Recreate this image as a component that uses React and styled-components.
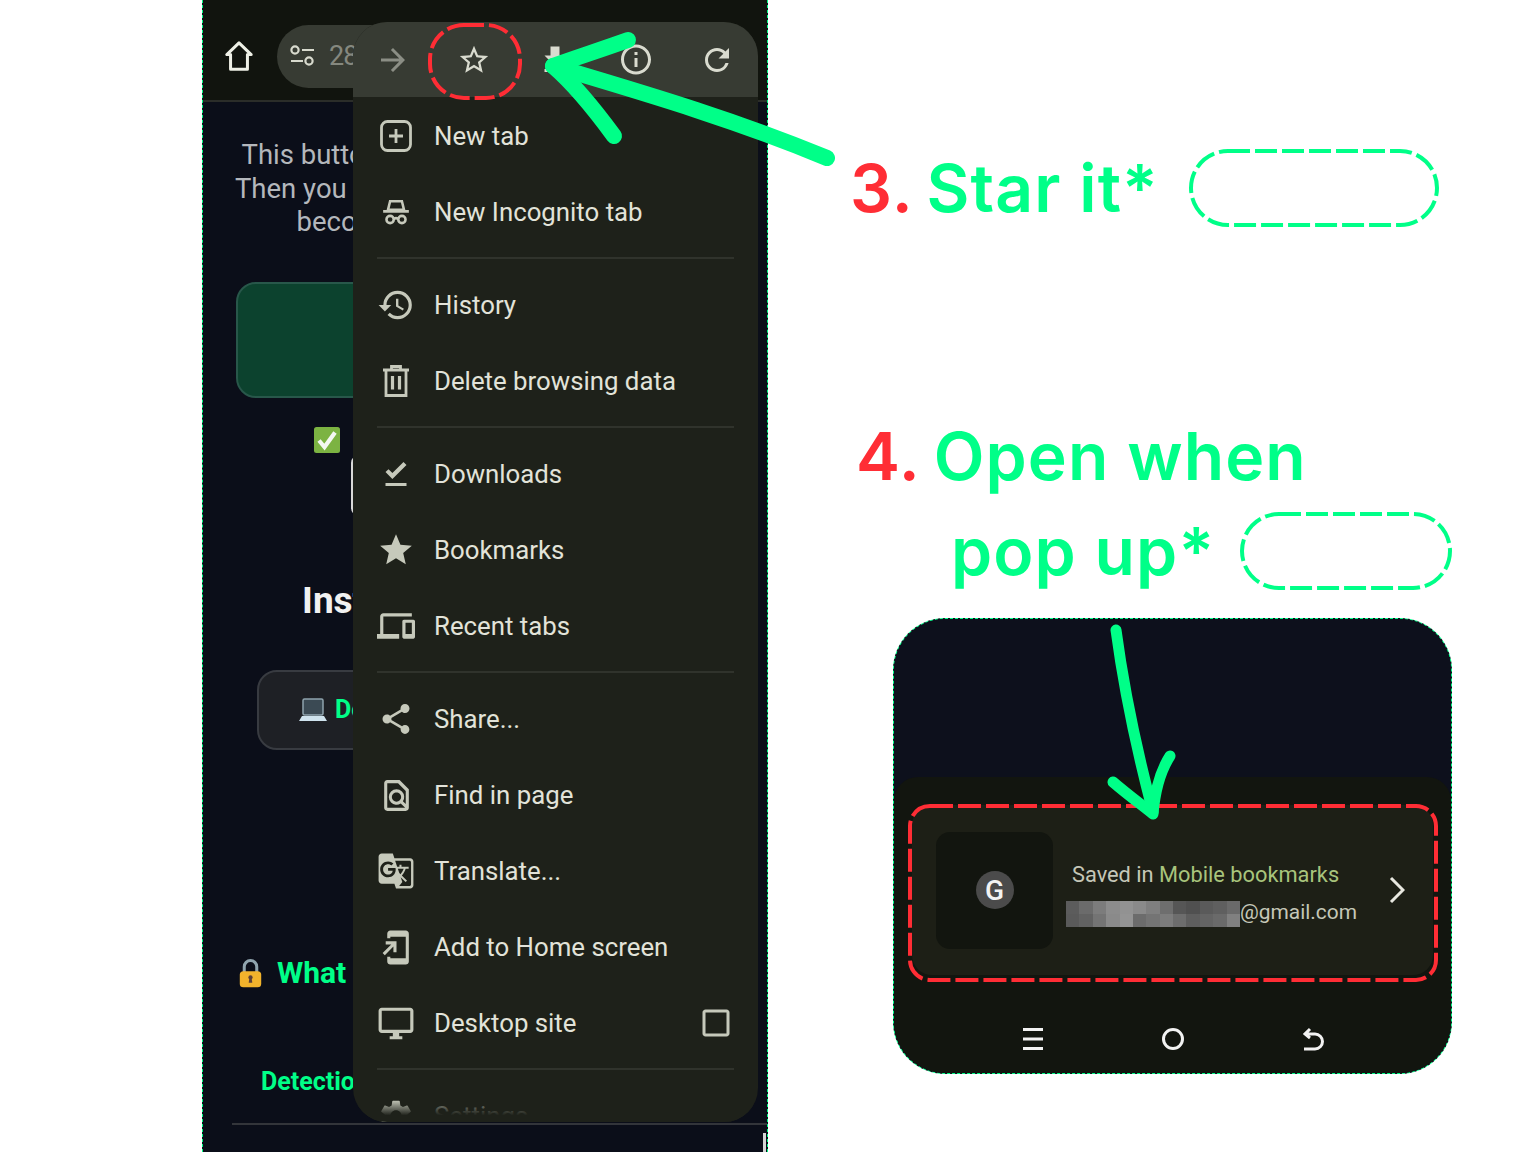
import React from "react";
import styled, { createGlobalStyle } from "styled-components";
import {
  MdArrowForward,
  MdStarBorder,
  MdFileDownload,
  MdInfoOutline,
  MdRefresh,
  MdHistory,
  MdFileDownloadDone,
  MdStar,
  MdOutlineDevices,
  MdShare,
  MdOutlineFindInPage,
  MdGTranslate,
  MdOutlineAddToHomeScreen,
  MdOutlineDesktopWindows,
  MdCheckBoxOutlineBlank,
  MdSettings,
} from "react-icons/md";

const GREEN = "#00ff88";
const RED = "#ff2d35";

const Global = createGlobalStyle`
  html, body { margin: 0; padding: 0; background: #fff; overflow: hidden; }
  * { box-sizing: border-box; }
  body { font-family: Roboto, "Liberation Sans", sans-serif; }
`;

const Page = styled.div`
  position: relative;
  width: 1536px;
  height: 1152px;
  display: flex;
  padding-left: 202px;
  overflow: hidden;
  background: #fff;
`;

/* left phone screenshot */
const Phone = styled.div`
  position: relative;
  width: 566px;
  height: 1152px;
  background: #0b0e19;
  border-left: 1px dashed ${GREEN};
  border-right: 1px dashed ${GREEN};
  overflow: hidden;
`;
const TopBar = styled.div`
  height: 102px;
  background: #11140e;
  border-bottom: 2px solid #2b2d29;
  display: flex;
  align-items: center;
  gap: 23px;
  padding: 12px 0 0 21px;
  color: #eef0e6;
`;
const Pill = styled.div`
  width: 200px;
  height: 63px;
  border-radius: 32px;
  background: #373b33;
  display: flex;
  align-items: center;
  gap: 12px;
  padding-left: 12px;
  color: #d8dace;
`;
const Faded = styled.span`
  font-size: 27px;
  color: #85887f;
  letter-spacing: -1px;
`;
const Body = styled.div`
  display: flex;
  flex-direction: column;
  align-items: center;
  padding: 36px 33px 0;
`;
const Intro = styled.p`
  margin: 0;
  text-align: center;
  font-size: 27.5px;
  line-height: 33.5px;
  color: #b4b7bc;
  white-space: nowrap;
`;
const GreenCard = styled.div`
  width: 100%;
  height: 116px;
  margin-top: 43px;
  background: #0c422e;
  border: 2px solid #28574a;
  border-radius: 20px;
`;
const CheckLine = styled.div`
  margin-top: 27px;
  height: 30px;
  display: flex;
  align-items: center;
  gap: 12px;
  color: ${GREEN};
  font-size: 24px;
  font-weight: 700;
  white-space: nowrap;
`;
const Outlined = styled.div`
  width: 268px;
  height: 61px;
  border: 2px solid #d8d8d8;
  border-radius: 8px;
`;
const SectionTitle = styled.h2`
  margin: 63px 0 0;
  font-size: 37px;
  line-height: 44px;
  font-weight: 700;
  color: #f1f1f1;
  white-space: nowrap;
`;
const DarkButton = styled.div`
  width: 456px;
  height: 80px;
  margin-top: 47px;
  background: #1e2025;
  border: 2px solid #383b41;
  border-radius: 20px;
  display: flex;
  align-items: center;
  padding-left: 39px;
  gap: 7px;
  color: ${GREEN};
  font-size: 25px;
  font-weight: 700;
`;
const WhatRow = styled.div`
  align-self: flex-start;
  margin: 205px 0 0 2px;
  display: flex;
  align-items: center;
  gap: 14px;
  color: ${GREEN};
  font-size: 30px;
  line-height: 36px;
  font-weight: 700;
  white-space: nowrap;
`;
const TableHead = styled.div`
  align-self: stretch;
  margin: 76px -33px 0 -4px;
  padding: 0 0 26px 29px;
  border-bottom: 2px solid #33353a;
  color: ${GREEN};
  font-size: 25px;
  line-height: 30px;
  font-weight: 700;
  white-space: nowrap;
`;
const EdgeSliver = styled.div`
  position: absolute;
  right: 1px;
  bottom: 0;
  width: 3px;
  height: 19px;
  background: #d6d6d6;
`;

/* chrome overflow menu */
const Menu = styled.div`
  position: absolute;
  left: 150px;
  top: 22px;
  width: 405px;
  height: 1100px;
  background: #1e211a;
  border-radius: 34px;
  overflow: hidden;
  &::after {
    content: "";
    position: absolute;
    left: 0;
    right: 0;
    bottom: 0;
    height: 22px;
    background: linear-gradient(to bottom, rgba(30, 33, 26, 0), #1e211a 70%);
  }
`;
const MenuBar = styled.div`
  height: 75px;
  background: #373b33;
  display: flex;
  align-items: center;
  gap: 45px;
  padding-left: 22px;
  color: #d9dbcf;
`;
const BarIcon = styled.span`
  display: flex;
  width: 36px;
  justify-content: center;
  color: ${(p) => p.$color || "#d9dbcf"};
`;
const Group = styled.div`
  padding: 0 0 8px;
  margin: 0 24px 7px;
  border-bottom: ${(p) => (p.$last ? "0" : "2px solid #30332c")};
`;
const Row = styled.div`
  height: 76px;
  padding-top: 2px;
  display: flex;
  align-items: center;
  color: ${(p) => (p.$dim ? "#8f9288" : "#e2e3d9")};
  font-size: 25.8px;
  white-space: nowrap;
`;
const RowIcon = styled.span`
  width: 38px;
  margin-right: 19px;
  display: flex;
  justify-content: center;
  color: #c6c9bb;
`;
const RowEnd = styled.span`
  margin-left: auto;
  display: flex;
  color: #c6c9bb;
`;

/* right instructions */
const Side = styled.div`
  flex: 1;
  display: flex;
  flex-direction: column;
`;
const Line = styled.div`
  display: flex;
  align-items: center;
  margin: ${(p) => p.$margin};
`;
const Heading = styled.div`
  color: ${GREEN};
  font-family: Inter, sans-serif;
  font-size: 66px;
  line-height: 76px;
  letter-spacing: 1.1px;
  font-weight: 600;
  white-space: nowrap;
`;
const Num = styled.span`
  color: ${RED};
  margin-right: -5px;
`;
const Popup = styled.div`
  width: 559px;
  height: 456px;
  margin: 28px 0 0 125px;
  background: #0d101c;
  border: 1px dashed ${GREEN};
  border-radius: 52px;
  overflow: hidden;
  display: flex;
  flex-direction: column;
  justify-content: flex-end;
`;
const Sheet = styled.div`
  height: 296px;
  background: #12150f;
  border-radius: 24px 24px 0 0;
  padding: 28px 18px 0;
`;
const SavedCard = styled.div`
  height: 170px;
  background: #1d1f16;
  border-radius: 20px;
  display: flex;
  align-items: center;
  padding-left: 24px;
`;
const Thumb = styled.div`
  width: 117px;
  height: 117px;
  background: #12150f;
  border-radius: 14px;
  display: flex;
  align-items: center;
  justify-content: center;
`;
const Favicon = styled.div`
  width: 38px;
  height: 38px;
  border-radius: 50%;
  background: #4b4b4b;
  color: #f3f3f3;
  font-size: 28px;
  font-weight: 500;
  display: flex;
  align-items: center;
  justify-content: center;
`;
const SavedText = styled.div`
  margin-left: 13px;
  width: 300px;
  padding-top: 6px;
`;
const SavedTitle = styled.div`
  padding-left: 6px;
  font-size: 21.8px;
  line-height: 30px;
  color: #c5c7b8;
  white-space: nowrap;
`;
const Accent = styled.span`
  color: #a8c47c;
`;
const Account = styled.div`
  display: flex;
  align-items: center;
  margin-top: 11px;
  font-size: 20.9px;
  line-height: 28px;
  color: #c5c7b8;
`;
const Email = styled.span`
  margin-top: -3px;
`;
const Mosaic = styled.div`
  width: 174px;
  height: 26px;
  flex: none;
  display: grid;
  grid-template-columns: repeat(13, 1fr);
  grid-template-rows: repeat(2, 1fr);
`;
const Pixel = styled.i`
  display: block;
  background: ${(p) => p.$c};
`;
const Chevron = styled.svg`
  margin-left: 23px;
  flex: none;
  color: #e8e8e0;
`;
const NavBar = styled.div`
  height: 72px;
  margin-top: 28px;
  padding: 0 109px 0 110px;
  display: flex;
  align-items: center;
  justify-content: space-between;
  color: #f2f2f2;
`;

/* hand drawn marks sit above everything else */
const Marks = styled.svg`
  position: absolute;
  left: 0;
  top: 0;
  pointer-events: none;
`;
const DashedPill = styled.svg`
  display: block;
  flex: none;
  overflow: visible;
  margin-left: ${(p) => p.$left}px;
`;

const HomeIcon = () => (
  <svg width="30" height="32" viewBox="0 0 32 34" fill="none" stroke="currentColor" strokeWidth="3.2" strokeLinejoin="round">
    <path d="M16 3 3 15.500h4V31h18V15.500h4z" />
  </svg>
);
const NewTabIcon = () => (
  <svg width="34" height="34" viewBox="0 0 34 34" fill="none" stroke="currentColor" strokeWidth="2.800">
    <rect x="2.500" y="2.500" width="29" height="29" rx="6" />
    <path d="M17 10v14M10 17h14" />
  </svg>
);
const Incognito = () => (
  <svg width="30" height="30" viewBox="0 0 28 28" fill="none" stroke="currentColor" strokeWidth="2.400">
    <path d="M8.500 4h11l2 8h-15z" />
    <path d="M2 13.500h24" strokeWidth="2.600" />
    <circle cx="8.500" cy="21" r="3.400" />
    <circle cx="19.500" cy="21" r="3.400" />
    <path d="M12 20.500c1.200-.9 2.800-.9 4 0" />
  </svg>
);
const TrashIcon = () => (
  <svg width="30" height="34" viewBox="0 0 30 34" fill="none" stroke="currentColor" strokeWidth="2.800">
    <path d="M2 6h26M10.500 5V2.500h9V5" />
    <path d="M5 6v25.500h20V6" />
    <path d="M11.500 12v13.500M18.500 12v13.500" strokeWidth="3.200" />
  </svg>
);
const Tune = () => (
  <svg width="28" height="28" viewBox="0 0 28 28" fill="none" stroke="currentColor" strokeWidth="2.200">
    <circle cx="6" cy="8" r="3.600" />
    <path d="M13 8h12M2 19h12" />
    <circle cx="20" cy="19" r="3.600" />
  </svg>
);
const CheckEmoji = () => (
  <svg width="28" height="28" viewBox="0 0 28 28">
    <rect x="1" y="1" width="26" height="26" rx="2.500" fill="#7cb342" />
    <path d="M6 14.500l5.500 6.500L22 6.500" fill="none" stroke="#f4f7f2" strokeWidth="4.200" />
  </svg>
);
const LaptopEmoji = () => (
  <svg width="30" height="28" viewBox="0 0 30 28">
    <rect x="5" y="3" width="20" height="16" rx="1.500" fill="#3b4a54" stroke="#8fa3ad" strokeWidth="1.500" />
    <path d="M4 20h22l3 5H1z" fill="#cfe3ee" />
  </svg>
);
const LockEmoji = () => (
  <svg width="25" height="34" viewBox="0 0 28 34">
    <path d="M7 16V10a7 7 0 0 1 14 0v6" fill="none" stroke="#90a4ae" strokeWidth="3.400" />
    <rect x="2" y="15" width="24" height="18" rx="4" fill="#f2b32c" />
    <circle cx="14" cy="22" r="2.400" fill="#5d4037" />
    <path d="M12.800 22h2.400l.8 6h-4z" fill="#5d4037" />
  </svg>
);

const groups = [
  [
    { icon: <NewTabIcon />, label: "New tab" },
    { icon: <Incognito />, label: "New Incognito tab" },
  ],
  [
    { icon: <MdHistory size={38} />, label: "History" },
    { icon: <TrashIcon />, label: "Delete browsing data" },
  ],
  [
    { icon: <MdFileDownloadDone size={36} />, label: "Downloads" },
    { icon: <MdStar size={38} />, label: "Bookmarks" },
    { icon: <MdOutlineDevices size={40} />, label: "Recent tabs" },
  ],
  [
    { icon: <MdShare size={36} />, label: "Share..." },
    { icon: <MdOutlineFindInPage size={37} />, label: "Find in page" },
    { icon: <MdGTranslate size={38} />, label: "Translate..." },
    { icon: <MdOutlineAddToHomeScreen size={37} />, label: "Add to Home screen" },
    {
      icon: <MdOutlineDesktopWindows size={39} />,
      label: "Desktop site",
      end: <MdCheckBoxOutlineBlank size={36} />,
    },
  ],
];

const mosaic = [
  "#5c5c5c #6b6b6b #7c7c7c #8c8c8c #929292 #8a8a8a #7f7f7f #6e6e6e #565656 #505050 #5a5a5a #5f5f5f #6a6a6a",
  "#5a5a5a #626262 #747474 #8a8a8a #949494 #6c6c6c #747474 #7c7c7c #6d6d6d #5e5e5e #646464 #6a6a6a #808080",
].join(" ").split(" ");

const App = () => {
  return (
    <Page>
      <Global />
      <Phone>
        <TopBar>
          <HomeIcon />
          <Pill>
            <Tune />
            <Faded>281</Faded>
          </Pill>
        </TopBar>
        <Body>
          <Intro>
            This button goes green once it's tapped.
            <br />
            Then you can use the shortcut anywhere.
            <br />
            become a saved web page app
          </Intro>
          <GreenCard />
          <CheckLine>
            <CheckEmoji />
            Check the bookmark's name
          </CheckLine>
          <Outlined />
          <SectionTitle>Installing the shortcut</SectionTitle>
          <DarkButton>
            <LaptopEmoji />
            Download for desktop
          </DarkButton>
          <WhatRow>
            <LockEmoji />
            What it does
          </WhatRow>
          <TableHead>Detection</TableHead>
        </Body>
        <EdgeSliver />

        <Menu>
          <MenuBar>
            <BarIcon $color="#8b8e85"><MdArrowForward size={36} /></BarIcon>
            <BarIcon><MdStarBorder size={34} /></BarIcon>
            <BarIcon><MdFileDownload size={36} /></BarIcon>
            <BarIcon><MdInfoOutline size={37} /></BarIcon>
            <BarIcon><MdRefresh size={40} /></BarIcon>
          </MenuBar>
          {groups.map((rows, i) => (
            <Group key={i}>
              {rows.map((r) => (
                <Row key={r.label}>
                  <RowIcon>{r.icon}</RowIcon>
                  {r.label}
                  {r.end && <RowEnd>{r.end}</RowEnd>}
                </Row>
              ))}
            </Group>
          ))}
          <Group $last>
            <Row $dim>
              <RowIcon><MdSettings size={38} /></RowIcon>
              Settings
            </Row>
          </Group>
        </Menu>
      </Phone>

      <Side>
        <Line $margin="149px 0 0 82px">
          <Heading><Num>3.</Num> Star it*</Heading>
          <DashedPill $left={30} width="250" height="78" viewBox="0 0 250 78" fill="none">
            <rect x="2" y="2" width="246" height="74" rx="37" stroke={GREEN} strokeWidth="4" strokeDasharray="22 5" />
          </DashedPill>
        </Line>
        <Line $margin="191px 0 0 88px">
          <Heading><Num>4.</Num> Open when</Heading>
        </Line>
        <Line $margin="18px 0 0 183px">
          <Heading>pop up*</Heading>
          <DashedPill $left={25} width="212" height="78" viewBox="0 0 212 78" fill="none">
            <rect x="2" y="2" width="208" height="74" rx="37" stroke={GREEN} strokeWidth="4" strokeDasharray="22 5" />
          </DashedPill>
        </Line>
        <Popup>
          <Sheet>
            <SavedCard>
              <Thumb>
                <Favicon>G</Favicon>
              </Thumb>
              <SavedText>
                <SavedTitle>
                  Saved in <Accent>Mobile bookmarks</Accent>
                </SavedTitle>
                <Account>
                  <Mosaic>
                    {mosaic.map((c, i) => (
                      <Pixel key={i} $c={c} />
                    ))}
                  </Mosaic>
                  <Email>@gmail.com</Email>
                </Account>
              </SavedText>
              <Chevron width="16" height="28" viewBox="0 0 16 28" fill="none" stroke="currentColor" strokeWidth="3">
                <path d="M2 2l12 12L2 26" />
              </Chevron>
            </SavedCard>
            <NavBar>
              <svg width="22" height="24" viewBox="0 0 22 24" stroke="currentColor" strokeWidth="3">
                <path d="M1 2.500h20M1 12h20M1 21.500h20" />
              </svg>
              <svg width="24" height="24" viewBox="0 0 24 24" fill="none" stroke="currentColor" strokeWidth="3">
                <circle cx="12" cy="12" r="9.500" />
              </svg>
              <svg width="22" height="24" viewBox="0 0 22 24" fill="none" stroke="currentColor" strokeWidth="3">
                <path d="M2 22h11a7 7 0 0 0 0-15H3M8 2 3 7l5 4" />
              </svg>
            </NavBar>
          </Sheet>
        </Popup>
      </Side>

      <Marks width="1536" height="1152" viewBox="0 0 1536 1152" fill="none">
        <rect x="430" y="25" width="90" height="73" rx="34" stroke={RED} strokeWidth="4" strokeDasharray="20 5" />
        <rect x="910" y="806" width="526" height="174" rx="20" stroke={RED} strokeWidth="4" strokeDasharray="23 5" />
        <g stroke={GREEN} strokeWidth="16" strokeLinecap="round" strokeLinejoin="round">
          <path d="M827 158 C730 118 640 92 553 66" />
          <path d="M628 40 C600 50 575 58 553 66 C575 85 595 110 614 136" />
        </g>
        <g stroke={GREEN} strokeWidth="11" strokeLinecap="round" strokeLinejoin="round">
          <path d="M1116 630 C1124 690 1138 755 1153 812" />
          <path d="M1113 782 C1128 795 1142 805 1153 814 C1155 790 1161 770 1170 756" />
        </g>
      </Marks>
    </Page>
  );
};

export default App;
